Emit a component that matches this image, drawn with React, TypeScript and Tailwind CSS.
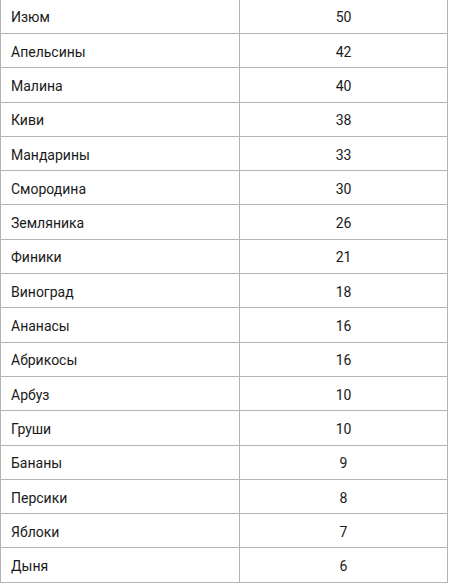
import React from 'react';

const FRUITS: [string, number][] = [
  ['Изюм', 50],
  ['Апельсины', 42],
  ['Малина', 40],
  ['Киви', 38],
  ['Мандарины', 33],
  ['Смородина', 30],
  ['Земляника', 26],
  ['Финики', 21],
  ['Виноград', 18],
  ['Ананасы', 16],
  ['Абрикосы', 16],
  ['Арбуз', 10],
  ['Груши', 10],
  ['Бананы', 9],
  ['Персики', 8],
  ['Яблоки', 7],
  ['Дыня', 6],
];

export default function App() {
  return (
    <div className="w-[449px] h-[583px] overflow-hidden bg-white font-['Roboto',sans-serif] text-[14px] text-[#1a1a1a]">
      <table className="-mt-[1.3px] w-[448px] border-collapse">
        <tbody>
          {FRUITS.map(([name, count]) => (
            <tr key={name} className="h-[34.3px]">
              <td className="w-[239px] border border-[#b4b4b4] px-[10px] pt-[3px] pb-0 align-middle">{name}</td>
              <td className="border border-[#b4b4b4] pt-[3px] pb-0 text-center align-middle">{count}</td>
            </tr>
          ))}
        </tbody>
      </table>
    </div>
  );
}
